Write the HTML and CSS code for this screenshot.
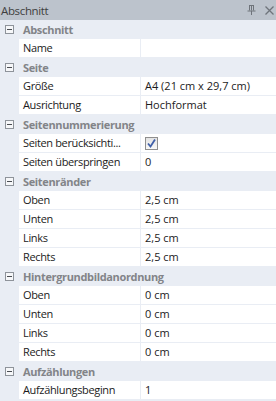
FILE: index.html
```html
<!DOCTYPE html>
<html lang="de">
<head>
  <meta charset="UTF-8">
  <title>Abschnitt</title>
  <link rel="stylesheet" href="styles.css">
</head>
<body>
<div class="panel">
  <div class="titlebar">
    <span class="title">Abschnitt</span>
    <span class="tools">
      <svg class="tool" width="9" height="10" viewBox="0 0 9 10">
        <path d="M2 0.5h5M2.5 0.5v5M6.5 0.5v5M4.5 0.5v5M0.5 6h8M4.5 6v4" stroke="#6f747b" fill="none"/>
      </svg>
      <svg class="tool" width="9" height="9" viewBox="0 0 9 9">
        <path d="M0.5 0.5l8 8M8.5 0.5l-8 8" stroke="#6f747b" stroke-width="1.3" fill="none"/>
      </svg>
    </span>
  </div>

  <div class="grid">
    <div class="group"><span class="toggle"></span><span class="label">Abschnitt</span></div>
    <div class="row"><span class="name">Name</span><span class="value"></span></div>

    <div class="group"><span class="toggle"></span><span class="label">Seite</span></div>
    <div class="row"><span class="name">Größe</span><span class="value">A4 (21 cm x 29,7 cm)</span></div>
    <div class="row"><span class="name">Ausrichtung</span><span class="value">Hochformat</span></div>

    <div class="group"><span class="toggle"></span><span class="label">Seitennummerierung</span></div>
    <div class="row"><span class="name">Seiten berücksichti...</span><span class="value"><span class="check">
      <svg width="11" height="11" viewBox="0 0 11 11"><path d="M2 5.5l2.5 3L9 1.5" stroke="#3f5fa8" stroke-width="1.8" fill="none"/></svg>
    </span></span></div>
    <div class="row"><span class="name">Seiten überspringen</span><span class="value">0</span></div>

    <div class="group"><span class="toggle"></span><span class="label">Seitenränder</span></div>
    <div class="row"><span class="name">Oben</span><span class="value">2,5 cm</span></div>
    <div class="row"><span class="name">Unten</span><span class="value">2,5 cm</span></div>
    <div class="row"><span class="name">Links</span><span class="value">2,5 cm</span></div>
    <div class="row"><span class="name">Rechts</span><span class="value">2,5 cm</span></div>

    <div class="group"><span class="toggle"></span><span class="label">Hintergrundbildanordnung</span></div>
    <div class="row"><span class="name">Oben</span><span class="value">0 cm</span></div>
    <div class="row"><span class="name">Unten</span><span class="value">0 cm</span></div>
    <div class="row"><span class="name">Links</span><span class="value">0 cm</span></div>
    <div class="row"><span class="name">Rechts</span><span class="value">0 cm</span></div>

    <div class="group"><span class="toggle"></span><span class="label">Aufzählungen</span></div>
    <div class="row"><span class="name">Aufzählungsbeginn</span><span class="value">1</span></div>
  </div>
</div>
</body>
</html>
```

FILE: styles.css
```css
body {
  margin: 0;
  font-family: 'Open Sans', 'Noto Sans', sans-serif;
  font-size: 11px;
  letter-spacing: -0.35px;
  color: #1b1b1b;
  background-color: #e9edf4;
}

.panel {
  width: 276px;
  height: 401px;
  overflow: hidden;
  background-color: #e9edf4;
}

.titlebar {
  height: 20px;
  display: flex;
  align-items: center;
  justify-content: space-between;
  background-color: #bcc3cc;
  padding: 0 2px 0 1px;
}

.title {
  color: #3f3f3f;
  font-size: 11.5px;
}

.tools {
  display: flex;
  align-items: center;
  gap: 9px;
}

.tool {
  display: block;
}

.group {
  height: 18px;
  margin-bottom: 1px;
  display: flex;
  align-items: center;
}

.toggle {
  width: 9px;
  height: 9px;
  box-sizing: border-box;
  border: 1px solid #8e939a;
  background-color: #f6f7f9;
  margin-left: 5px;
  position: relative;
}

.toggle::after {
  content: '';
  position: absolute;
  left: 1px;
  top: 3px;
  width: 5px;
  height: 1px;
  background-color: #4a4d52;
}

.label {
  margin-left: 9px;
  font-weight: bold;
  color: #828488;
}

.row {
  height: 18px;
  margin-bottom: 1px;
  display: flex;
}

.name {
  margin-left: 19px;
  width: 117px;
  padding-left: 4px;
  background-color: #fff;
  line-height: 18px;
  white-space: nowrap;
  overflow: hidden;
}

.value {
  margin-left: 1px;
  flex: 1;
  padding-left: 4px;
  background-color: #fff;
  line-height: 18px;
  letter-spacing: 0;
  display: flex;
  align-items: center;
}

.check {
  width: 13px;
  height: 13px;
  box-sizing: border-box;
  border: 1px solid #8f8f8f;
  background: linear-gradient(#e4e4e4, #f8f8f8);
  display: flex;
  align-items: center;
  justify-content: center;
}

.check svg {
  display: block;
}
```
